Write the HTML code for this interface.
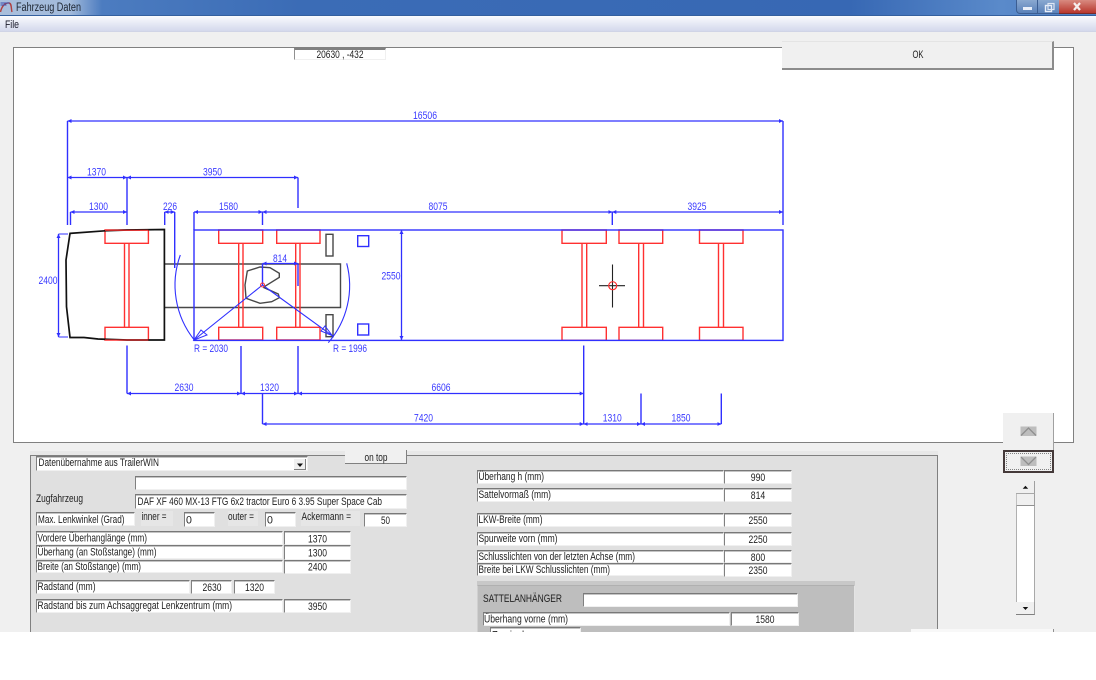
<!DOCTYPE html>
<html lang="de">
<head>
<meta charset="utf-8">
<title>Fahrzeug Daten</title>
<style>
html,body{margin:0;padding:0;background:#fff}
body{position:relative;width:1096px;height:680px;overflow:hidden;background:#f0f0f0;font-family:"Liberation Sans",sans-serif}
svg{position:absolute;left:0;top:0;display:block;filter:blur(.3px)}
.a{position:absolute;box-sizing:border-box}
.f{position:absolute;box-sizing:border-box;background:#fff;border-top:1px solid #787878;border-left:1px solid #808080;border-bottom:1px solid #f0f0f0;border-right:1px solid #f0f0f0;box-shadow:inset 0 1px 0 #c4c4c4}
#tx text{font-family:"Liberation Sans",sans-serif;font-size:10.6px;fill:#222}
#dr text{font-family:"Liberation Sans",sans-serif;font-size:10.8px;fill:#3a3aff;text-anchor:middle}
#tx .c{text-anchor:middle}
</style>
</head>
<body>
<!-- title bar -->
<div class="a" style="left:0;top:0;width:1096px;height:16px;background:linear-gradient(90deg,#a9bfdc 0,#a2badb 70px,#4c7cc0 102px,#3b6cb6 300px,#3768b4 850px,#5a8aca 1000px,#4e7fc2 1096px);border-bottom:1px solid #34609f"></div>
<div class="a" style="left:0;top:16px;width:1096px;height:16px;background:linear-gradient(#fafbfe,#e6e9f5 50%,#d4d9ec);border-bottom:1px solid #d0d4e6"></div>
<div class="a" style="left:1016px;top:0;width:22px;height:14px;background:linear-gradient(#8aa8d0,#5a82ba);border:1px solid #3c5e92;border-top:0;border-radius:0 0 0 4px"></div>
<div class="a" style="left:1038px;top:0;width:21px;height:14px;background:linear-gradient(#8aa8d0,#5a82ba);border-bottom:1px solid #3c5e92"></div>
<div class="a" style="left:1059px;top:0;width:37px;height:14px;background:linear-gradient(#d88a80,#b8362c);border-bottom:1px solid #7a2a2a"></div>
<!-- canvas -->
<div class="a" style="left:13px;top:47px;width:1061px;height:396px;background:#fff;border:1px solid #808080"></div>

<!-- drawing -->
<svg id="dr" width="1096" height="680" viewBox="0 0 1096 680">
<defs>
<marker id="m" markerUnits="userSpaceOnUse" markerWidth="5" markerHeight="5" refX="4" refY="2.5" orient="auto-start-reverse"><path d="M0 .5L4 2.5L0 4.5z" fill="#3030ff"/></marker>
</defs>
<!-- title icon -->
<g fill="none">
<path d="M.5 12C2 5 6 2.5 9 3s2 6 3 9" stroke="#b04040" stroke-width="1.4"/>
<path d="M.5 3h9M.5 5h6" stroke="#3a50b0" stroke-width="1"/>
</g>
<!-- window buttons -->
<rect x="1023" y="7" width="9" height="3" fill="#e8eef8"/>
<rect x="1045.5" y="5.5" width="6" height="6" fill="none" stroke="#e8eef8" stroke-width="1.4"/>
<rect x="1048" y="3.5" width="6" height="6" fill="none" stroke="#dde6f4" stroke-width="1.2"/>
<path d="M1074 3l6 7M1080 3l-6 7" stroke="#f6eeee" stroke-width="2.2" fill="none"/>

<!-- grey chassis -->
<g fill="none" stroke="#484848" stroke-width="1.4">
<path d="M164.5 264H340.5V307.5H164.5"/>
<rect x="326" y="234.3" width="7" height="21.7"/>
<rect x="326" y="314.7" width="7" height="22"/>
<path d="M263.3 287.3L279.3 277.3V273.3L270 267.7L260 267L247.3 271L245 285L246 298.3L260 303.3L271.7 301.7L279.3 297.7L278.3 294L263.3 287.3"/>
</g>

<!-- red axles -->
<g fill="none" stroke="#ff3030" stroke-width="1.4">
<path d="M105 230h43.4v13.3h-43.4zM105 327.3h43.4v12.7h-43.4zM124.5 243.3v84M129 243.3v84"/>
<path d="M218.7 230h44v13.3h-44zM218.7 327.3h44v12.7h-44zM238.7 243.3v84M243 243.3v84"/>
<path d="M276.7 230h43.3v13.3h-43.3zM276.7 327.3h43.3v12.7h-43.3zM295.7 243.3v84M300 243.3v84"/>
<path d="M562 230h44.3v13.3h-44.3zM562 327.3h44.3v13h-44.3zM582 243.3v84M586.7 243.3v84"/>
<path d="M619 230h43.7v13.3h-43.7zM619 327.3h43.7v13h-43.7zM638.7 243.3v84M643.5 243.3v84"/>
<path d="M699.5 230h43.5v13.3h-43.5zM699.5 327.3h43.5v13h-43.5zM718.5 243.3v84M723.5 243.3v84"/>
</g>

<!-- cab -->
<path d="M70 233.4L105 230.8L127 230L164.4 229.5V340H127L98 339L84 337.5H70L66.5 306.7L66 260Z" fill="none" stroke="#111" stroke-width="1.7"/>
<path d="M105 230.2h43.4M105 340h43.4" stroke="#ff3030" stroke-width="1" fill="none"/>

<!-- trailer outline & blue extensions -->
<g fill="none" stroke="#3030ff" stroke-width="1.4">
<rect x="194" y="230" width="589" height="110.4"/>
<rect x="357.7" y="235.7" width="11" height="10.8"/>
<rect x="357.7" y="324" width="11" height="11"/>
<path d="M67.5 121V225M783 121V225M127 177.5V225M298 177.5V208M70.5 212V225M164.7 212V225M174.7 212V268M194 212V230M262.5 212V225M612.3 212V225"/>
<path d="M127 345.5V393.5M241 346V393.5M298 346V393.5M583.7 345.5V424M262.5 393.5V424M641 393.5V424M721.3 393.5V424"/>
<path d="M262.5 263.5V285M298 263.5V286"/>
<path d="M262.5 285L194 340M262.5 285L332.3 335.7" stroke-width="1.1"/>
<path d="M180.3 255A88 88 0 0 0 194.3 340" stroke-width="1.1"/>
<path d="M346.7 263.3A87 87 0 0 1 328.3 342.7" stroke-width="1.1"/>
<path d="M194 340L207 335L201 330ZM332.3 335.7L321 331L325 326Z" stroke-width="1"/>
</g>

<!-- dimension lines with arrows -->
<g fill="none" stroke="#3030ff" stroke-width="1.3" marker-start="url(#m)" marker-end="url(#m)">
<path d="M67.5 121H783"/>
<path d="M67.5 177.5H127"/>
<path d="M127 177.5H298"/>
<path d="M70.5 212H127"/>
<path d="M164.7 212H174.7"/>
<path d="M194 212H262.5"/>
<path d="M262.5 212H612.3"/>
<path d="M612.3 212H783"/>
<path d="M401.5 230V340"/>
<path d="M58.5 234V337"/>
<path d="M262.5 263.5H298"/>
<path d="M127 393.5H241"/>
<path d="M241 393.5H298"/>
<path d="M298 393.5H583.7"/>
<path d="M262.5 424H583.7"/>
<path d="M583.7 424H641"/>
<path d="M641 424H721.3"/>
</g>
<path d="M58.5 234H68M58.5 337H68" stroke="#3030ff" stroke-width="1" fill="none"/>

<!-- kingpin / centre marks -->
<circle cx="262.5" cy="285" r="2" fill="none" stroke="#ff3030" stroke-width="1"/>
<path d="M612.5 264.5V307.5M599 285.7H625" stroke="#222" stroke-width="1.1" fill="none"/>
<circle cx="612.7" cy="285.7" r="4" fill="none" stroke="#ff3030" stroke-width="1.2"/>

<!-- dimension labels -->
<text x="425" y="119" textLength="24" lengthAdjust="spacingAndGlyphs">16506</text>
<text x="96.5" y="175.5" textLength="19" lengthAdjust="spacingAndGlyphs">1370</text>
<text x="212.5" y="175.5" textLength="19" lengthAdjust="spacingAndGlyphs">3950</text>
<text x="98.5" y="210" textLength="19" lengthAdjust="spacingAndGlyphs">1300</text>
<text x="170" y="210" textLength="14" lengthAdjust="spacingAndGlyphs">226</text>
<text x="228.5" y="210" textLength="19" lengthAdjust="spacingAndGlyphs">1580</text>
<text x="438" y="210" textLength="19" lengthAdjust="spacingAndGlyphs">8075</text>
<text x="697" y="210" textLength="19" lengthAdjust="spacingAndGlyphs">3925</text>
<text x="48" y="284" textLength="19" lengthAdjust="spacingAndGlyphs">2400</text>
<text x="391" y="279.5" textLength="19" lengthAdjust="spacingAndGlyphs">2550</text>
<text x="280" y="262" textLength="14" lengthAdjust="spacingAndGlyphs">814</text>
<text x="211" y="352" textLength="34" lengthAdjust="spacingAndGlyphs">R = 2030</text>
<text x="350" y="352" textLength="34" lengthAdjust="spacingAndGlyphs">R = 1996</text>
<text x="184" y="391" textLength="19" lengthAdjust="spacingAndGlyphs">2630</text>
<text x="269.5" y="391" textLength="19" lengthAdjust="spacingAndGlyphs">1320</text>
<text x="441" y="391" textLength="19" lengthAdjust="spacingAndGlyphs">6606</text>
<text x="423.5" y="421.5" textLength="19" lengthAdjust="spacingAndGlyphs">7420</text>
<text x="612.3" y="421.5" textLength="19" lengthAdjust="spacingAndGlyphs">1310</text>
<text x="681" y="421.5" textLength="19" lengthAdjust="spacingAndGlyphs">1850</text>
</svg>

<!-- coordinates box -->
<div class="f" style="left:294px;top:48px;width:92px;height:12px;border-left:1px solid #909090;border-top:2px solid #808080;box-shadow:none"></div>

<!-- OK button -->
<div class="a" style="left:782px;top:41px;width:272px;height:29px;background:#f0f0f0;border-top:1px solid #e4e4e4;border-right:2px solid #8c8c8c;border-bottom:2px solid #8c8c8c"></div>

<!-- lower panel -->
<div class="a" style="left:30px;top:451px;width:908px;height:4px;background:#e8e8e8"></div>
<div class="a" style="left:30px;top:455px;width:908px;height:177px;background:#e0e0e0;border-top:1px solid #808080;border-left:1px solid #808080;border-right:1px solid #808080"></div>
<div class="a" style="left:345px;top:450px;width:62px;height:14px;background:#f0f0f0;border-right:1px solid #808080;border-bottom:1px solid #808080"></div>

<!-- left fields -->
<div class="f" style="left:36px;top:456px;width:272px;height:15px"></div>
<div class="a" style="left:294px;top:459px;width:12px;height:11px;background:#f0f0f0;border-right:1px solid #808080;border-bottom:1px solid #808080"></div>
<div class="f" style="left:135px;top:476px;width:272px;height:14px"></div>
<div class="f" style="left:135px;top:494px;width:272px;height:15px"></div>
<div class="f" style="left:36px;top:512px;width:99px;height:14px"></div>
<div class="a" style="left:141px;top:511px;width:32px;height:15px;background:#e6e6e6"></div>
<div class="f" style="left:184px;top:512px;width:31px;height:15px"></div>
<div class="a" style="left:228px;top:511px;width:30px;height:15px;background:#e6e6e6"></div>
<div class="f" style="left:265px;top:512px;width:31px;height:15px"></div>
<div class="a" style="left:301px;top:511px;width:59px;height:15px;background:#e6e6e6"></div>
<div class="f" style="left:364px;top:513px;width:43px;height:14px"></div>
<div class="f" style="left:36px;top:531px;width:247px;height:14px"></div>
<div class="f" style="left:284px;top:531px;width:67px;height:14px"></div>
<div class="f" style="left:36px;top:545px;width:247px;height:14px"></div>
<div class="f" style="left:284px;top:545px;width:67px;height:15px"></div>
<div class="f" style="left:36px;top:560px;width:247px;height:13px"></div>
<div class="f" style="left:284px;top:560px;width:67px;height:14px"></div>
<div class="f" style="left:36px;top:580px;width:154px;height:14px"></div>
<div class="f" style="left:191px;top:580px;width:41px;height:14px"></div>
<div class="f" style="left:234px;top:580px;width:41px;height:14px"></div>
<div class="f" style="left:36px;top:599px;width:247px;height:14px"></div>
<div class="f" style="left:284px;top:599px;width:67px;height:14px"></div>

<!-- right fields -->
<div class="f" style="left:477px;top:470px;width:247px;height:14px"></div>
<div class="f" style="left:724px;top:470px;width:68px;height:14px"></div>
<div class="f" style="left:477px;top:488px;width:247px;height:14px"></div>
<div class="f" style="left:724px;top:488px;width:68px;height:14px"></div>
<div class="f" style="left:477px;top:513px;width:247px;height:14px"></div>
<div class="f" style="left:724px;top:513px;width:68px;height:14px"></div>
<div class="f" style="left:477px;top:532px;width:247px;height:14px"></div>
<div class="f" style="left:724px;top:532px;width:68px;height:14px"></div>
<div class="f" style="left:477px;top:550px;width:247px;height:13px"></div>
<div class="f" style="left:724px;top:550px;width:68px;height:13px"></div>
<div class="f" style="left:477px;top:563px;width:247px;height:13px"></div>
<div class="f" style="left:724px;top:563px;width:68px;height:14px"></div>

<!-- Sattelanhaenger group -->
<div class="a" style="left:477px;top:581px;width:378px;height:5px;background:#c8c8c8"></div>
<div class="a" style="left:477px;top:585px;width:378px;height:47px;background:#bebebe;border-left:1px solid #d0d0d0;border-right:1px solid #e4e4e4;border-top:1px solid #b0b0b0"></div>
<div class="f" style="left:583px;top:593px;width:215px;height:14px"></div>
<div class="f" style="left:483px;top:612px;width:247px;height:14px"></div>
<div class="f" style="left:731px;top:612px;width:68px;height:14px"></div>
<div class="f" style="left:490px;top:627px;width:91px;height:14px"></div>

<!-- arrow buttons -->
<div class="a" style="left:1003px;top:413px;width:51px;height:37px;background:#f0f0f0;border-right:1px solid #a0a0a0"></div>
<div class="a" style="left:1003px;top:450px;width:51px;height:23px;background:#f0f0f0;border:2px solid #453a3a"></div>
<div class="a" style="left:1006px;top:453px;width:45px;height:17px;border:1px dotted #808080"></div>

<!-- scrollbar -->
<div class="a" style="left:1016px;top:481px;width:19px;height:134px;background:#fff;border-left:1px solid #b0b0b0;border-right:1px solid #a8a8a8"></div>
<div class="a" style="left:1016px;top:481px;width:19px;height:13px;background:#f0f0f0;border-right:1px solid #a0a0a0;border-bottom:1px solid #a8a8a8"></div>
<div class="a" style="left:1016px;top:494px;width:19px;height:12px;background:#f0f0f0;border-right:1px solid #a0a0a0;border-left:1px solid #c0c0c0;border-bottom:1px solid #909090"></div>
<div class="a" style="left:1016px;top:602px;width:19px;height:13px;background:#f0f0f0;border-right:1px solid #a0a0a0;border-bottom:1px solid #808080"></div>
<div class="a" style="left:911px;top:629px;width:143px;height:3px;background:#f8f8f8;border-right:1px solid #909090"></div>

<!-- text layer -->
<svg id="tx" width="1096" height="680" viewBox="0 0 1096 680">
<text x="16" y="11" textLength="65" lengthAdjust="spacingAndGlyphs" style="font-size:11.5px;fill:#1c2430">Fahrzeug Daten</text>
<text x="5" y="28" textLength="14" lengthAdjust="spacingAndGlyphs" style="font-size:11px;fill:#1a1a2a">File</text>
<text class="c" x="340" y="58" textLength="47" lengthAdjust="spacingAndGlyphs">20630 , -432</text>
<text class="c" x="918" y="58" textLength="11" lengthAdjust="spacingAndGlyphs">OK</text>
<text class="c" x="376" y="461" textLength="23" lengthAdjust="spacingAndGlyphs">on top</text>

<text x="38.5" y="466" textLength="120.5" lengthAdjust="spacingAndGlyphs">Datenübernahme aus TrailerWIN</text>
<path d="M297 463.5h6l-3 3.5z" fill="#111"/>
<text x="36" y="502" textLength="47" lengthAdjust="spacingAndGlyphs">Zugfahrzeug</text>
<text x="137.5" y="505" textLength="244.5" lengthAdjust="spacingAndGlyphs">DAF XF 460 MX-13 FTG 6x2 tractor  Euro 6 3.95 Super Space Cab</text>
<text x="38" y="523" textLength="86.5" lengthAdjust="spacingAndGlyphs">Max. Lenkwinkel (Grad)</text>
<text x="141.5" y="520" textLength="25" lengthAdjust="spacingAndGlyphs">inner =</text>
<text x="186" y="523.5">0</text>
<text x="228" y="520" textLength="26" lengthAdjust="spacingAndGlyphs">outer =</text>
<text x="267" y="523.5">0</text>
<text x="301.5" y="520" textLength="49.5" lengthAdjust="spacingAndGlyphs">Ackermann =</text>
<text class="c" x="385.5" y="524" textLength="9" lengthAdjust="spacingAndGlyphs">50</text>

<text x="37.5" y="541.5" textLength="109.5" lengthAdjust="spacingAndGlyphs">Vordere Überhanglänge  (mm)</text>
<text class="c" x="317.5" y="542.5" textLength="19" lengthAdjust="spacingAndGlyphs">1370</text>
<text x="37.5" y="555.5" textLength="119" lengthAdjust="spacingAndGlyphs">Überhang (an Stoßstange)  (mm)</text>
<text class="c" x="317.5" y="556.5" textLength="19" lengthAdjust="spacingAndGlyphs">1300</text>
<text x="37.5" y="570" textLength="103.5" lengthAdjust="spacingAndGlyphs">Breite (an Stoßstange)  (mm)</text>
<text class="c" x="317.5" y="570.5" textLength="19" lengthAdjust="spacingAndGlyphs">2400</text>
<text x="37.5" y="590" textLength="58" lengthAdjust="spacingAndGlyphs">Radstand  (mm)</text>
<text class="c" x="212" y="591" textLength="19" lengthAdjust="spacingAndGlyphs">2630</text>
<text class="c" x="254.5" y="591" textLength="19" lengthAdjust="spacingAndGlyphs">1320</text>
<text x="37.5" y="609" textLength="194.5" lengthAdjust="spacingAndGlyphs">Radstand bis zum Achsaggregat Lenkzentrum    (mm)</text>
<text class="c" x="317.5" y="610" textLength="19" lengthAdjust="spacingAndGlyphs">3950</text>

<text x="478.5" y="480" textLength="65.5" lengthAdjust="spacingAndGlyphs">Überhang h  (mm)</text>
<text class="c" x="758" y="481" textLength="14.5" lengthAdjust="spacingAndGlyphs">990</text>
<text x="478.5" y="498" textLength="72.5" lengthAdjust="spacingAndGlyphs">Sattelvormaß  (mm)</text>
<text class="c" x="758" y="499" textLength="14.5" lengthAdjust="spacingAndGlyphs">814</text>
<text x="478.5" y="523" textLength="64" lengthAdjust="spacingAndGlyphs">LKW-Breite  (mm)</text>
<text class="c" x="758" y="524" textLength="19" lengthAdjust="spacingAndGlyphs">2550</text>
<text x="478.5" y="542" textLength="79" lengthAdjust="spacingAndGlyphs">Spurweite vorn   (mm)</text>
<text class="c" x="758" y="543" textLength="19" lengthAdjust="spacingAndGlyphs">2250</text>
<text x="478.5" y="560" textLength="156.5" lengthAdjust="spacingAndGlyphs">Schlusslichten von der letzten Achse  (mm)</text>
<text class="c" x="758" y="561" textLength="14.5" lengthAdjust="spacingAndGlyphs">800</text>
<text x="478.5" y="573" textLength="131.5" lengthAdjust="spacingAndGlyphs">Breite bei LKW Schlusslichten  (mm)</text>
<text class="c" x="758" y="574" textLength="19" lengthAdjust="spacingAndGlyphs">2350</text>

<text x="483" y="602" textLength="79" lengthAdjust="spacingAndGlyphs">SATTELANHÄNGER</text>
<text x="484" y="622.5" textLength="84" lengthAdjust="spacingAndGlyphs">Überhang vorne  (mm)</text>
<text class="c" x="765" y="623" textLength="19" lengthAdjust="spacingAndGlyphs">1580</text>
<text x="492" y="638.5" textLength="40" lengthAdjust="spacingAndGlyphs">Zweiachs</text>

<!-- chevrons -->
<rect x="1020.5" y="426.5" width="16" height="9.5" fill="#bdbdbd"/>
<path d="M1021 435.5L1028.5 428L1036 435.5" fill="none" stroke="#8e8e8e" stroke-width="1.3"/>
<rect x="1020.5" y="456.5" width="16" height="9.5" fill="#bdbdbd"/>
<path d="M1021 457L1028.5 464.5L1036 457" fill="none" stroke="#8e8e8e" stroke-width="1.3"/>
<path d="M1022.7 488.8h5.5l-2.75-3z" fill="#111"/>
<path d="M1022.7 607h5.5l-2.75 3z" fill="#111"/>
</svg>

<!-- white bottom band -->
<div class="a" style="left:0;top:632px;width:1096px;height:48px;background:#fff"></div>
</body>
</html>
